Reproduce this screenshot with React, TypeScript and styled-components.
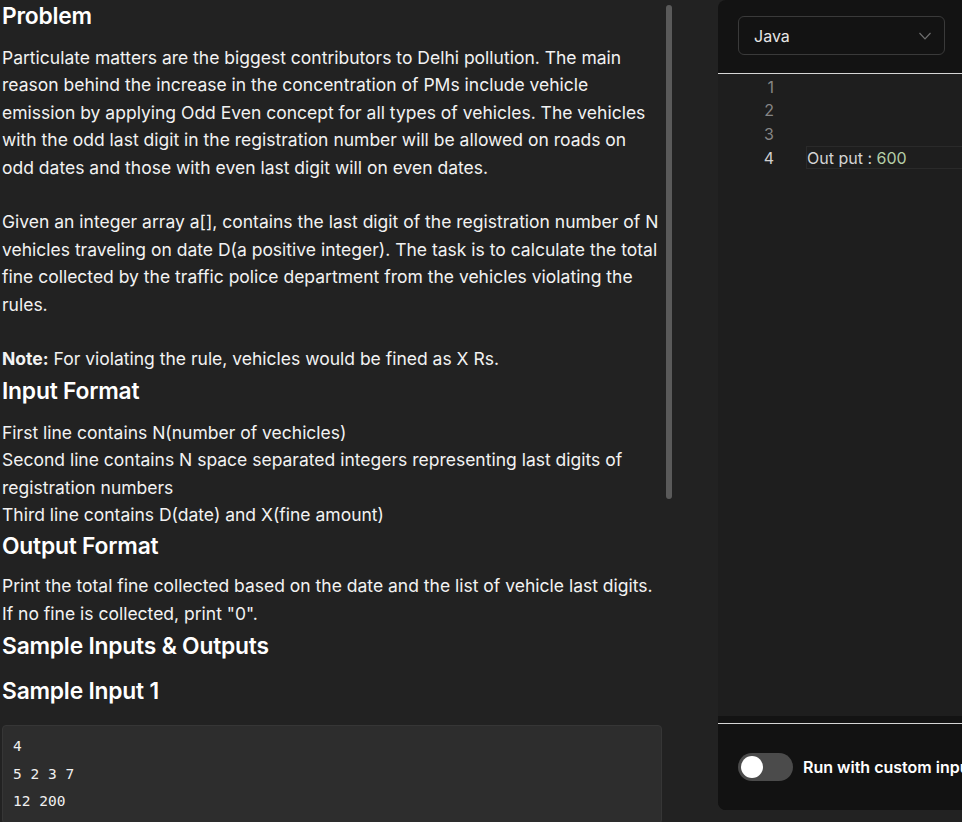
import React from 'react';
import styled, { createGlobalStyle } from 'styled-components';

const GlobalStyle = createGlobalStyle`
  html, body {
    margin: 0;
    padding: 0;
    background: #222222;
    overflow: hidden;
  }
  * {
    box-sizing: border-box;
  }
`;

const Page = styled.div`
  display: flex;
  gap: 46px;
  width: 1200px;
  height: 822px;
  background: #222222;
  font-family: Inter, 'Noto Sans', sans-serif;
  color: #f2f2f2;
`;

const ProblemPane = styled.div`
  position: relative;
  flex: 0 0 672px;
  height: 822px;
  overflow: hidden;
  padding: 0 10px 0 2px;
`;

const ScrollThumb = styled.div`
  position: absolute;
  top: 5px;
  right: 0;
  width: 6px;
  height: 494px;
  border-radius: 3px;
  background: #5a5a5a;
`;

const Heading = styled.h2<{ $after: number }>`
  margin: 0 0 ${(p) => p.$after}px;
  font-size: 22.8px;
  font-weight: 600;
  line-height: 32px;
  letter-spacing: -0.2px;
  color: #ffffff;
`;

const Para = styled.p<{ $after?: number }>`
  margin: 0 0 ${(p) => p.$after ?? 0}px;
  font-size: 17.5px;
  line-height: 27.4px;
  color: #f2f2f2;
`;

const CodeBox = styled.pre`
  margin: 0;
  padding: 7px 10px;
  width: 660px;
  background: #2d2d2d;
  border: 1px solid #363636;
  border-radius: 4px;
  font-family: 'DejaVu Sans Mono', 'Liberation Mono', monospace;
  font-size: 14.5px;
  line-height: 27.5px;
  color: #f0f0f0;
`;

const EditorPane = styled.div`
  flex: 0 0 420px;
  height: 810px;
  display: flex;
  flex-direction: column;
  background: #131313;
  border-radius: 8px 0 0 8px;
  overflow: hidden;
`;

const Toolbar = styled.div`
  height: 74px;
  padding: 16px 20px;
  border-bottom: 1px solid #d6d6d6;
`;

const LangSelect = styled.div`
  width: 207px;
  height: 39px;
  display: flex;
  align-items: center;
  justify-content: space-between;
  padding: 0 12px 0 15px;
  border: 1px solid #3a3a3a;
  border-radius: 6px;
  font-size: 16px;
  color: #e6e6e6;
`;

const CodeArea = styled.div`
  flex: 1;
  margin-bottom: 7px;
  padding-top: 1px;
  background: #1e1e1e;
`;

const CodeLine = styled.div`
  display: flex;
  height: 23.67px;
  align-items: center;
  font-size: 16px;
`;

const LineNo = styled.span<{ $active?: boolean }>`
  width: 56px;
  text-align: right;
  color: ${(p) => (p.$active ? '#d0d0d0' : '#858585')};
`;

const LineText = styled.span<{ $active?: boolean }>`
  flex: 1;
  height: 23px;
  margin-left: 32px;
  display: flex;
  align-items: center;
  border: 1px solid ${(p) => (p.$active ? '#2a2a2a' : 'transparent')};
  border-right: none;
  color: #d4d4d4;
`;

const NumberToken = styled.span`
  color: #b5cea8;
`;

const Footer = styled.div`
  height: 87px;
  display: flex;
  align-items: center;
  gap: 10px;
  padding: 0 20px;
  border-top: 1px solid #d6d6d6;
  background: #121212;
`;

const Switch = styled.div`
  width: 55px;
  height: 28px;
  border-radius: 14px;
  background: #4b4b4b;
  padding: 3px;
`;

const Knob = styled.div`
  width: 22px;
  height: 22px;
  border-radius: 50%;
  background: #ffffff;
`;

const SwitchLabel = styled.span`
  font-size: 16px;
  font-weight: 600;
  color: #ffffff;
  white-space: nowrap;
`;

const lines = ['', '', '', 'output'];

export default function App() {
  return (
    <>
      <GlobalStyle />
      <Page>
        <ProblemPane>
          <Heading $after={12}>Problem</Heading>
          <Para $after={27.4}>
            Particulate matters are the biggest contributors to Delhi pollution. The main
            reason behind the increase in the concentration of PMs include vehicle
            emission by applying Odd Even concept for all types of vehicles. The vehicles
            with the odd last digit in the registration number will be allowed on roads on
            odd dates and those with even last digit will on even dates.
          </Para>
          <Para $after={27.4}>
            Given an integer array a[], contains the last digit of the registration number of N
            vehicles traveling on date D(a positive integer). The task is to calculate the total
            fine collected by the traffic police department from the vehicles violating the
            rules.
          </Para>
          <Para $after={2}>
            <b>Note:</b> For violating the rule, vehicles would be fined as X Rs.
          </Para>
          <Heading $after={12}>Input Format</Heading>
          <Para $after={2}>
            First line contains N(number of vechicles)
            <br />
            Second line contains N space separated integers representing last digits of
            registration numbers
            <br />
            Third line contains D(date) and X(fine amount)
          </Para>
          <Heading $after={10}>Output Format</Heading>
          <Para $after={3}>
            Print the total fine collected based on the date and the list of vehicle last digits.
            <br />
            If no fine is collected, print "0".
          </Para>
          <Heading $after={13}>Sample Inputs &amp; Outputs</Heading>
          <Heading $after={18}>Sample Input 1</Heading>
          <CodeBox>{'4\n5 2 3 7\n12 200\n'}</CodeBox>
          <ScrollThumb />
        </ProblemPane>

        <EditorPane>
          <Toolbar>
            <LangSelect>
              <span>Java</span>
              <svg width="14" height="14" viewBox="0 0 14 14" fill="none">
                <path d="M1.5 4 L7 9.8 L12.5 4" stroke="#6f6f6f" strokeWidth="1.2" />
              </svg>
            </LangSelect>
          </Toolbar>
          <CodeArea>
            {lines.map((l, i) => (
              <CodeLine key={i}>
                <LineNo $active={i === 3}>{i + 1}</LineNo>
                <LineText $active={i === 3}>
                  {l === 'output' && (
                    <>
                      Out put : <NumberToken>&nbsp;600</NumberToken>
                    </>
                  )}
                </LineText>
              </CodeLine>
            ))}
          </CodeArea>
          <Footer>
            <Switch>
              <Knob />
            </Switch>
            <SwitchLabel>Run with custom input</SwitchLabel>
          </Footer>
        </EditorPane>
      </Page>
    </>
  );
}
